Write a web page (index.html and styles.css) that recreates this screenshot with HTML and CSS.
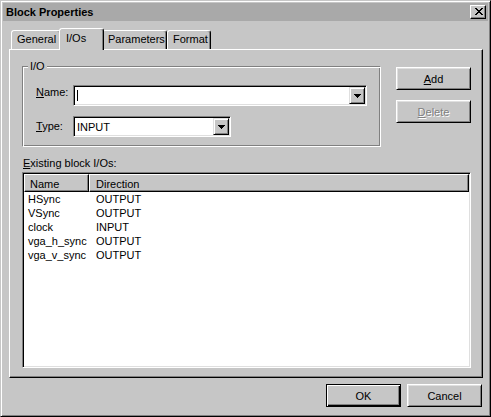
FILE: index.html
```
<!DOCTYPE html>
<html>
<head>
<meta charset="utf-8">
<link rel="stylesheet" href="styles.css">
</head>
<body>
<div class="window">
  <div class="titlebar">
    <span class="title">Block Properties</span>
    <div class="close">
      <svg width="8" height="7" viewBox="0 0 8 7" shape-rendering="crispEdges">
        <rect x="0" y="0" width="2" height="1"/><rect x="6" y="0" width="2" height="1"/>
        <rect x="1" y="1" width="2" height="1"/><rect x="5" y="1" width="2" height="1"/>
        <rect x="2" y="2" width="4" height="1"/>
        <rect x="3" y="3" width="2" height="1"/>
        <rect x="2" y="4" width="4" height="1"/>
        <rect x="1" y="5" width="2" height="1"/><rect x="5" y="5" width="2" height="1"/>
        <rect x="0" y="6" width="2" height="1"/><rect x="6" y="6" width="2" height="1"/>
      </svg>
    </div>
  </div>

  <div class="tabs">
    <div class="tab tab-general">General</div>
    <div class="tab tab-ios active">I/Os</div>
    <div class="tab tab-params">Parameters</div>
    <div class="tab tab-format">Format</div>
  </div>

  <div class="panel">
    <div class="top-row">
      <div class="group">
        <span class="legend">I/O</span>
        <div class="field-row">
          <span class="label label-name"><u>N</u>ame:</span>
          <div class="combo combo-name">
            <span class="combo-text"><span class="caret"></span></span>
            <span class="drop">
              <svg width="7" height="4" viewBox="0 0 7 4" shape-rendering="crispEdges"><rect x="0" y="0" width="7" height="1"/><rect x="1" y="1" width="5" height="1"/><rect x="2" y="2" width="3" height="1"/><rect x="3" y="3" width="1" height="1"/></svg>
            </span>
          </div>
        </div>
        <div class="field-row type-row">
          <span class="label label-type"><u>T</u>ype:</span>
          <div class="combo combo-type">
            <span class="combo-text">INPUT</span>
            <span class="drop">
              <svg width="7" height="4" viewBox="0 0 7 4" shape-rendering="crispEdges"><rect x="0" y="0" width="7" height="1"/><rect x="1" y="1" width="5" height="1"/><rect x="2" y="2" width="3" height="1"/><rect x="3" y="3" width="1" height="1"/></svg>
            </span>
          </div>
        </div>
      </div>
      <div class="side-buttons">
        <div class="btn"><span><u>A</u>dd</span></div>
        <div class="btn disabled"><span><u>D</u>elete</span></div>
      </div>
    </div>

    <div class="list-label"><u>E</u>xisting block I/Os:</div>

    <div class="listview">
      <div class="lv-header">
        <div class="hcell hc1">Name</div>
        <div class="hcell hc2">Direction</div>
      </div>
      <div class="lv-row"><span class="c1">HSync</span><span class="c2">OUTPUT</span></div>
      <div class="lv-row"><span class="c1">VSync</span><span class="c2">OUTPUT</span></div>
      <div class="lv-row"><span class="c1">clock</span><span class="c2">INPUT</span></div>
      <div class="lv-row"><span class="c1">vga_h_sync</span><span class="c2">OUTPUT</span></div>
      <div class="lv-row"><span class="c1">vga_v_sync</span><span class="c2">OUTPUT</span></div>
    </div>
  </div>

  <div class="footer">
    <div class="btn default"><span>OK</span></div>
    <div class="btn"><span>Cancel</span></div>
  </div>
</div>
</body>
</html>
```

FILE: styles.css
```
* { box-sizing: border-box; }

html, body {
  margin: 0;
  padding: 0;
  background: #c6c6c6;
}

body {
  font-family: "Liberation Sans", Arial, sans-serif;
  font-size: 11px;
  line-height: 14px;
  color: #000;
}

.window {
  width: 491px;
  height: 417px;
  background: #c6c6c6;
  border: 1px solid;
  border-color: #c6c6c6 #000 #000 #c6c6c6;
  box-shadow: inset 1px 1px #fff, inset -1px -1px #808080;
  padding: 2px;
  display: flex;
  flex-direction: column;
}

/* title bar */
.titlebar {
  height: 18px;
  flex: none;
  background: #a9a9a9;
  display: flex;
  align-items: center;
  padding: 0 2px 0 3px;
}

.title {
  font-weight: bold;
  color: #000;
}

.close {
  margin-left: auto;
  width: 16px;
  height: 14px;
  background: #c6c6c6;
  border: 1px solid;
  border-color: #fff #000 #000 #fff;
  box-shadow: inset -1px -1px #808080;
  display: flex;
  align-items: flex-start;
  padding: 2px 0 0 4px;
}

/* tabs */
.tabs {
  flex: none;
  height: 21px;
  margin: 7px 5px 0 6px;
  padding-left: 2px;
  display: flex;
  align-items: flex-end;
}

.tab {
  height: 19px;
  border: 1px solid;
  border-bottom: none;
  border-color: #fff #000 transparent #fff;
  border-radius: 3px 3px 0 0;
  box-shadow: inset -1px 0 #808080;
  background: #c6c6c6;
  padding: 0 0 0 5px;
  line-height: 17px;
  white-space: nowrap;
}

.tab-general { width: 50px; }
.tab-ios { width: 45px; }
.tab-params { width: 65px; }
.tab-format { width: 44px; }

.tab.active {
  height: 22px;
  margin: 0 -2px -1px -2px;
  padding: 1px 0 0 6px;
  position: relative;
  z-index: 1;
}

/* panel */
.panel {
  flex: none;
  height: 329px;
  margin: 0 5px 0 6px;
  border: 1px solid;
  border-color: #fff #000 #000 #fff;
  box-shadow: inset -1px -1px #808080;
  padding: 16px 11px 0 12px;
}

.top-row {
  display: flex;
  align-items: flex-start;
}

.group {
  position: relative;
  width: 359px;
  height: 81px;
  border: 1px solid;
  border-color: #808080 #fff #fff #808080;
  box-shadow: inset 1px 1px #fff, inset -1px -1px #808080;
  padding: 18px 0 0 13px;
}

.legend {
  position: absolute;
  top: -8px;
  left: 5px;
  padding: 0 2px;
  background: #c6c6c6;
}

.field-row {
  display: flex;
  align-items: flex-start;
  height: 21px;
}

.type-row { margin-top: 10px; }

.label {
  width: 37px;
  flex: none;
}

.label-type { padding-top: 3px; }

.combo {
  height: 21px;
  background: #fff;
  border: 1px solid;
  border-color: #808080 #fff #fff #808080;
  box-shadow: inset 1px 1px #000, inset -1px -1px #dfdfdf;
  padding: 1px;
  display: flex;
}

.combo-name { width: 294px; }
.combo-type { width: 158px; }

.combo-text {
  flex: 1;
  padding: 2px 0 0 2px;
  line-height: 14px;
}

.caret {
  display: block;
  width: 1px;
  height: 11px;
  margin: 1px 0 0 0;
  background: #000;
}

.drop {
  width: 16px;
  height: 17px;
  flex: none;
  background: #c6c6c6;
  border: 1px solid;
  border-color: #dfdfdf #000 #000 #dfdfdf;
  box-shadow: inset 1px 1px #fff, inset -1px -1px #808080;
  display: flex;
  align-items: center;
  justify-content: center;
  padding-top: 1px;
}

.side-buttons {
  margin: 1px 0 0 15px;
  display: flex;
  flex-direction: column;
  gap: 10px;
}

/* buttons */
.btn {
  width: 75px;
  height: 23px;
  background: #c6c6c6;
  border: 1px solid;
  border-color: #fff #000 #000 #fff;
  box-shadow: inset 1px 1px #dfdfdf, inset -1px -1px #808080;
  display: flex;
  align-items: center;
  justify-content: center;
}

.btn.disabled {
  color: #808080;
  text-shadow: 1px 1px #fff;
}

.btn.default {
  border-color: #000;
  box-shadow: inset 1px 1px #fff, inset -1px -1px #000, inset -2px -2px #808080;
}

/* list */
.list-label {
  margin-top: 9px;
  margin-left: 1px;
  line-height: 14px;
}

.listview {
  margin-top: 2px;
  height: 196px;
  background: #fff;
  border: 1px solid;
  border-color: #808080 #fff #fff #808080;
  box-shadow: inset 1px 1px #000, inset -1px -1px #dfdfdf;
  padding: 1px;
}

.lv-header {
  display: flex;
  height: 18px;
}

.hcell {
  height: 18px;
  background: #c6c6c6;
  border: 1px solid;
  border-color: #fff #000 #000 #fff;
  box-shadow: inset -1px -1px #808080;
  padding: 2px 0 0 5px;
  line-height: 14px;
}

.hc1 { width: 65px; }
.hc2 { flex: 1; padding-left: 6px; }

.lv-row {
  display: flex;
  height: 14px;
  line-height: 14px;
}

.c1 { width: 65px; padding-left: 4px; }
.c2 { padding-left: 7px; }

/* footer */
.footer {
  flex: none;
  margin-top: 6px;
  padding-right: 6px;
  display: flex;
  justify-content: flex-end;
  gap: 6px;
}
```
